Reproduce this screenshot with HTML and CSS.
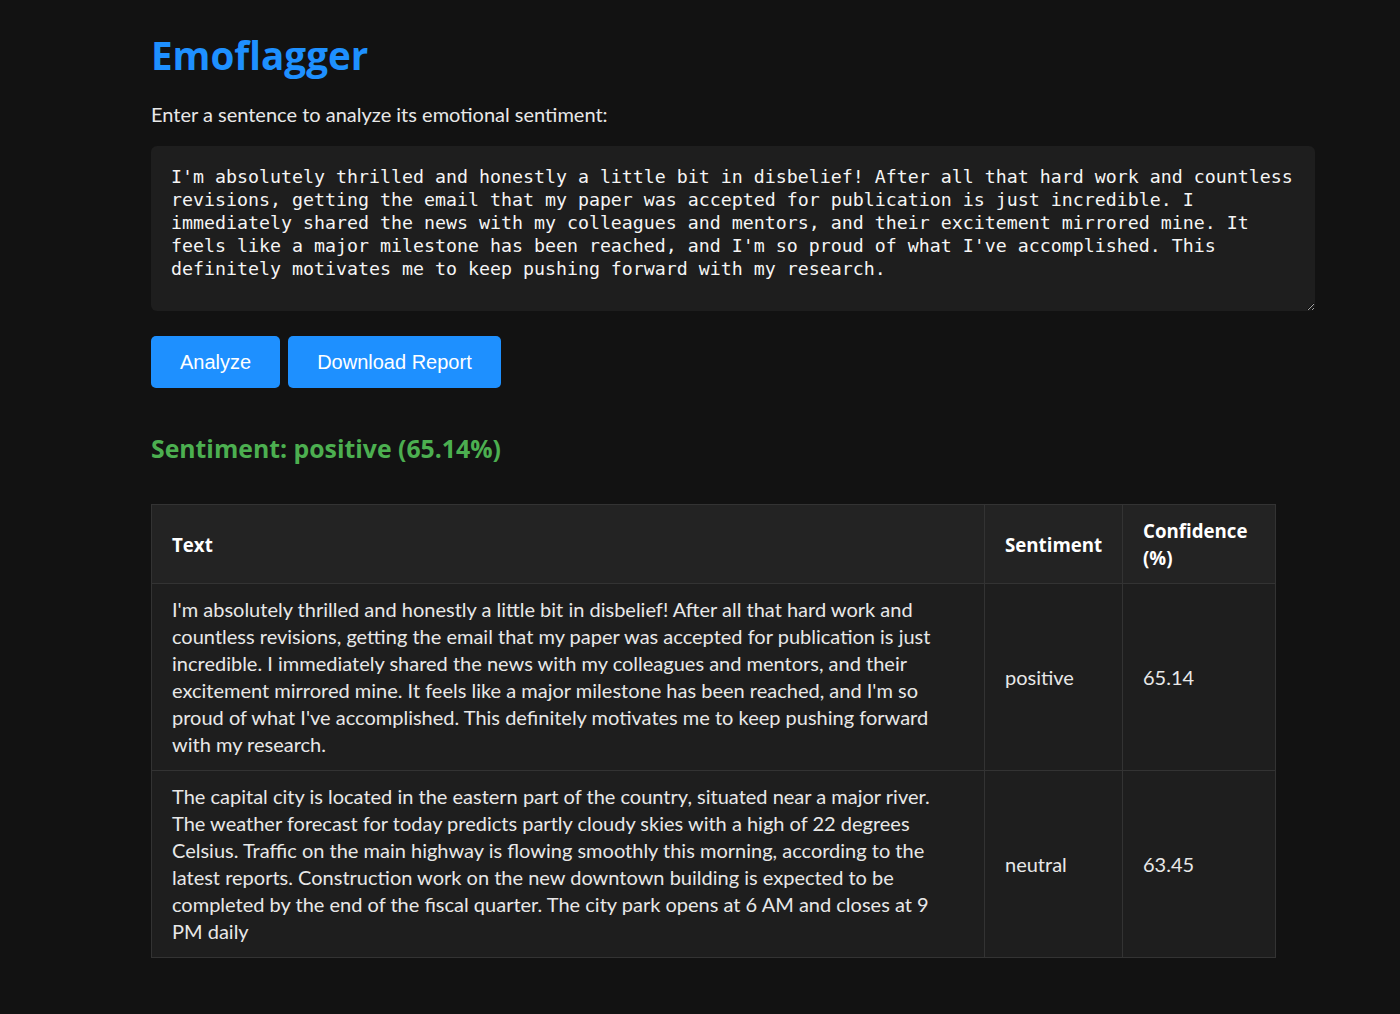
FILE: index.html
```html
<!DOCTYPE html>
<html lang="en">
<head>
<meta charset="utf-8">
<title>Emoflagger</title>
<link rel="stylesheet" href="styles.css">
</head>
<body>
<main class="container">
  <h1 class="title">Emoflagger</h1>
  <p class="prompt">Enter a sentence to analyze its emotional sentiment:</p>
  <textarea class="input" spellcheck="false">I'm absolutely thrilled and honestly a little bit in disbelief! After all that hard work and countless revisions, getting the email that my paper was accepted for publication is just incredible. I immediately shared the news with my colleagues and mentors, and their excitement mirrored mine. It feels like a major milestone has been reached, and I'm so proud of what I've accomplished. This definitely motivates me to keep pushing forward with my research.</textarea>
  <div class="actions">
    <button class="btn">Analyze</button>
    <button class="btn">Download Report</button>
  </div>
  <h2 class="result">Sentiment: positive (65.14%)</h2>
  <table class="report">
    <colgroup>
      <col class="col-text">
      <col class="col-sent">
      <col class="col-conf">
    </colgroup>
    <thead>
      <tr><th>Text</th><th>Sentiment</th><th>Confidence (%)</th></tr>
    </thead>
    <tbody>
      <tr>
        <td>I'm absolutely thrilled and honestly a little bit in disbelief! After all that hard work and countless revisions, getting the email that my paper was accepted for publication is just incredible. I immediately shared the news with my colleagues and mentors, and their excitement mirrored mine. It feels like a major milestone has been reached, and I'm so proud of what I've accomplished. This definitely motivates me to keep pushing forward with my research.</td>
        <td>positive</td>
        <td>65.14</td>
      </tr>
      <tr>
        <td>The capital city is located in the eastern part of the country, situated near a major river. The weather forecast for today predicts partly cloudy skies with a high of 22 degrees Celsius. Traffic on the main highway is flowing smoothly this morning, according to the latest reports. Construction work on the new downtown building is expected to be completed by the end of the fiscal quarter. The city park opens at 6 AM and closes at 9 PM daily</td>
        <td>neutral</td>
        <td>63.45</td>
      </tr>
    </tbody>
  </table>
</main>
</body>
</html>
```

FILE: styles.css
```css
* { box-sizing: border-box; }
html, body { margin: 0; padding: 0; }
body {
  background: #121212;
  color: #e8e8e8;
  font-family: "Lato", "Open Sans", sans-serif;
  font-size: 20px;
}
.container {
  width: 1164px;
  margin-left: 151px;
  padding-top: 30px;
}
.title {
  margin: 0;
  font-family: "Open Sans", "Lato", sans-serif;
  font-size: 38.6px;
  line-height: 50px;
  font-weight: 700;
  color: #1e90ff;
}
.prompt {
  margin: 21px 0 18px;
  line-height: 27px;
}
.input {
  display: block;
  width: 1164px;
  height: 165px;
  padding: 19px 20px;
  background: #1e1e1e;
  color: #f5f5f5;
  border: none;
  border-radius: 6px;
  font-family: "DejaVu Sans Mono", "Liberation Mono", monospace;
  font-size: 18.27px;
  line-height: 23px;
  resize: vertical;
  outline: none;
}
.actions {
  display: flex;
  gap: 8px;
  margin-top: 25px;
}
.btn {
  background: #1e90ff;
  color: #fff;
  border: none;
  border-radius: 5px;
  padding: 14px 29px;
  font-family: "Liberation Sans", Arial, sans-serif;
  font-size: 20px;
  line-height: 24px;
}
.result {
  margin: 44px 0 40px;
  font-family: "Open Sans", "Lato", sans-serif;
  font-size: 24.8px;
  line-height: 32px;
  font-weight: 700;
  color: #4caf50;
}
.report {
  width: 1124px;
  border-collapse: collapse;
  table-layout: fixed;
}
.col-text { width: 833px; }
.col-sent { width: 138px; }
.col-conf { width: 153px; }
.report th, .report td {
  border: 1px solid #333;
  padding: 12px 20px;
  text-align: left;
  line-height: 27px;
  vertical-align: middle;
}
.report th {
  background: #232323;
  color: #fff;
  font-family: "Open Sans", "Lato", sans-serif;
  font-size: 18.7px;
  font-weight: 700;
}
.report td {
  background: #1e1e1e;
}
```
